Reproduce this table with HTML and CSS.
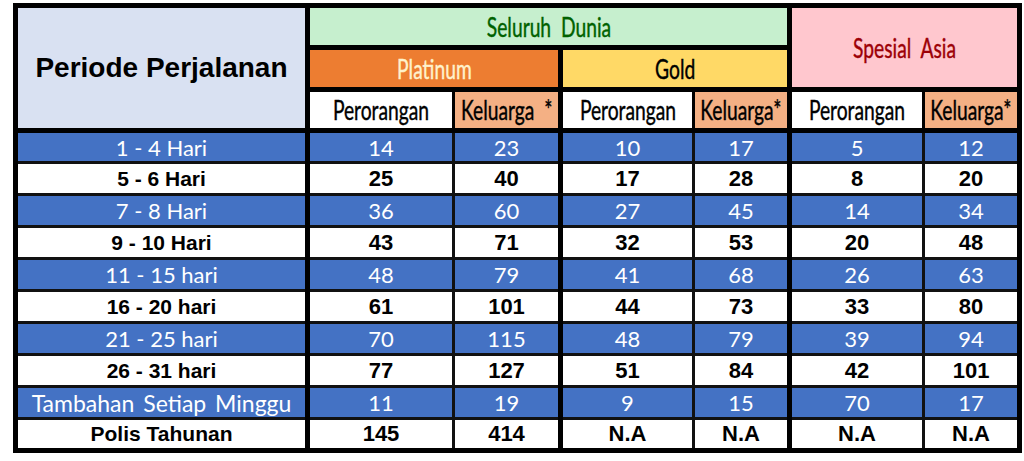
FILE: index.html
```html
<!DOCTYPE html>
<html>
<head>
<meta charset="utf-8">
<link rel="stylesheet" href="styles.css">
</head>
<body>
<table class="rates">
  <colgroup>
    <col class="c1"><col class="c2"><col class="c3"><col class="c4"><col class="c5"><col class="c6"><col class="c7">
  </colgroup>
  <thead>
    <tr class="hr1">
      <th rowspan="3" class="periode">Periode Perjalanan</th>
      <th colspan="4" class="world"><div class="cx"><span>Seluruh&nbsp; Dunia</span></div></th>
      <th colspan="2" rowspan="2" class="asia"><div class="cx"><span>Spesial&nbsp; Asia</span></div></th>
    </tr>
    <tr class="hr2">
      <th colspan="2" class="platinum"><div class="cx"><span>Platinum</span></div></th>
      <th colspan="2" class="gold"><div class="cx"><span>Gold</span></div></th>
    </tr>
    <tr class="hr3">
      <th class="per"><div class="cx"><span>Perorangan</span></div></th>
      <th class="kel grp"><div class="cx"><span>Keluarga&nbsp; *</span></div></th>
      <th class="per"><div class="cx"><span>Perorangan</span></div></th>
      <th class="kel grp"><div class="cx"><span>Keluarga*</span></div></th>
      <th class="per"><div class="cx"><span>Perorangan</span></div></th>
      <th class="kel"><div class="cx"><span>Keluarga*</span></div></th>
    </tr>
  </thead>
  <tbody>
    <tr class="blue"><td>1 - 4 Hari</td><td>14</td><td>23</td><td>10</td><td>17</td><td>5</td><td>12</td></tr>
    <tr class="white"><td>5 - 6 Hari</td><td>25</td><td>40</td><td>17</td><td>28</td><td>8</td><td>20</td></tr>
    <tr class="blue"><td>7 - 8 Hari</td><td>36</td><td>60</td><td>27</td><td>45</td><td>14</td><td>34</td></tr>
    <tr class="white"><td>9 - 10 Hari</td><td>43</td><td>71</td><td>32</td><td>53</td><td>20</td><td>48</td></tr>
    <tr class="blue"><td>11 - 15 hari</td><td>48</td><td>79</td><td>41</td><td>68</td><td>26</td><td>63</td></tr>
    <tr class="white"><td>16 - 20 hari</td><td>61</td><td>101</td><td>44</td><td>73</td><td>33</td><td>80</td></tr>
    <tr class="blue"><td>21 - 25 hari</td><td>70</td><td>115</td><td>48</td><td>79</td><td>39</td><td>94</td></tr>
    <tr class="white"><td>26 - 31 hari</td><td>77</td><td>127</td><td>51</td><td>84</td><td>42</td><td>101</td></tr>
    <tr class="blue"><td class="long">Tambahan Setiap Minggu</td><td>11</td><td>19</td><td>9</td><td>15</td><td>70</td><td>17</td></tr>
    <tr class="white"><td>Polis Tahunan</td><td>145</td><td>414</td><td>N.A</td><td>N.A</td><td>N.A</td><td>N.A</td></tr>
  </tbody>
</table>
</body>
</html>
```

FILE: styles.css
```css
html, body {
  margin: 0;
  padding: 0;
  background: #ffffff;
}

.rates {
  margin: 3px 0 0 13px;
  width: 1009px;
  table-layout: fixed;
  border-collapse: collapse;
  border: 5px solid #000;
}

.c1 { width: 292px; }
.c2 { width: 146px; }
.c3 { width: 107px; }
.c4 { width: 133px; }
.c5 { width: 96px; }
.c6 { width: 134px; }
.c7 { width: 96px; }

.rates th,
.rates td {
  border: 3px solid #111;
  padding: 0;
  text-align: center;
  vertical-align: middle;
  white-space: nowrap;
  overflow: hidden;
}

.rates th {
  font-family: Lato, "Open Sans", sans-serif;
  font-weight: normal;
  font-size: 26px;
  border-width: 5px;
  border-color: #000;
}

.cx {
  display: flex;
  justify-content: center;
  align-items: center;
}

.cx span {
  flex-shrink: 0;
  display: inline-block;
  transform: scaleX(0.74);
  line-height: 1;
  -webkit-text-stroke: 0.4px currentColor;
}

.rates th.per,
.rates th.kel {
  border-left-width: 3px;
  border-right-width: 3px;
}

.rates th.grp {
  border-right-width: 5px;
}

.hr1 { height: 42px; }
.hr2 { height: 42px; }
.hr3 { height: 41px; }

.rates th.periode {
  background: #d9e1f2;
  font-family: "Liberation Sans", Arial, sans-serif;
  font-weight: bold;
  font-size: 28px;
  color: #000;
}

.world {
  background: #c6efce;
  color: #006100;
}

.asia {
  background: #ffc7ce;
  color: #9c0006;
}

.platinum {
  background: #ed7d31;
  color: #fff2cc;
}

.gold {
  background: #ffd966;
  color: #000;
}

.per {
  background: #ffffff;
  color: #000;
}

.kel {
  background: #f4b084;
  color: #000;
}

.rates tbody tr {
  height: 32px;
}

.rates tbody td:nth-child(1),
.rates tbody td:nth-child(3),
.rates tbody td:nth-child(5) {
  border-right-width: 5px;
  border-right-color: #000;
}

.blue td {
  background: #4472c4;
  color: #ffffff;
  font-family: Lato, "Open Sans", sans-serif;
  font-size: 22px;
}

.blue td.long {
  font-size: 23px;
  word-spacing: 3px;
}

.white td {
  background: #ffffff;
  color: #000;
  font-family: "Liberation Sans", Arial, sans-serif;
  font-weight: bold;
  font-size: 22px;
}

.white td:first-child {
  font-size: 21px;
}
```
